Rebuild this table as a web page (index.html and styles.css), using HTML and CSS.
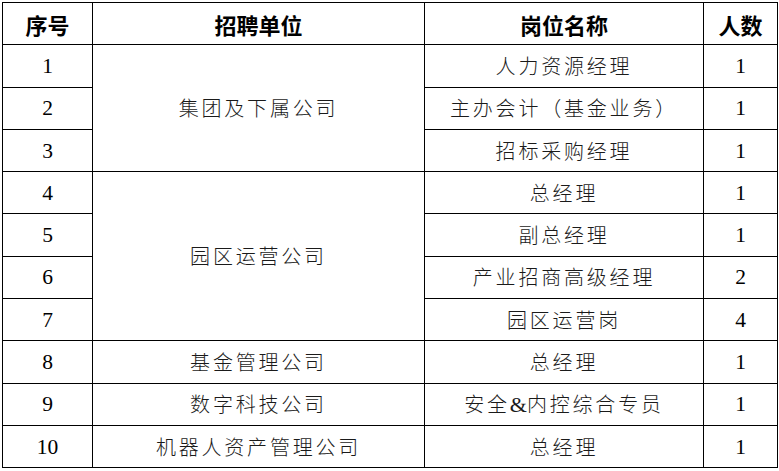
FILE: index.html
```html
<!DOCTYPE html>
<html lang="zh-CN">
<head>
<meta charset="utf-8">
<title>招聘岗位</title>
<link rel="stylesheet" href="styles.css">
</head>
<body>
<table class="jobs">
  <colgroup>
    <col class="c-no">
    <col class="c-unit">
    <col class="c-post">
    <col class="c-num">
  </colgroup>
  <thead>
    <tr>
      <th>序号</th>
      <th>招聘单位</th>
      <th>岗位名称</th>
      <th>人数</th>
    </tr>
  </thead>
  <tbody>
    <tr><td class="num">1</td><td class="cn" rowspan="3">集团及下属公司</td><td class="cn">人力资源经理</td><td class="num">1</td></tr>
    <tr><td class="num">2</td><td class="cn">主办会计（基金业务）</td><td class="num">1</td></tr>
    <tr><td class="num">3</td><td class="cn">招标采购经理</td><td class="num">1</td></tr>
    <tr><td class="num">4</td><td class="cn" rowspan="4">园区运营公司</td><td class="cn">总经理</td><td class="num">1</td></tr>
    <tr><td class="num">5</td><td class="cn">副总经理</td><td class="num">1</td></tr>
    <tr><td class="num">6</td><td class="cn">产业招商高级经理</td><td class="num">2</td></tr>
    <tr><td class="num">7</td><td class="cn">园区运营岗</td><td class="num">4</td></tr>
    <tr><td class="num">8</td><td class="cn">基金管理公司</td><td class="cn">总经理</td><td class="num">1</td></tr>
    <tr><td class="num">9</td><td class="cn">数字科技公司</td><td class="cn">安全<span class="amp">&amp;</span>内控综合专员</td><td class="num">1</td></tr>
    <tr><td class="num">10</td><td class="cn">机器人资产管理公司</td><td class="cn">总经理</td><td class="num">1</td></tr>
  </tbody>
</table>
</body>
</html>
```
FILE: styles.css
```css
html, body {
  margin: 0;
  padding: 0;
  background: #fff;
}
body {
  padding: 2px 0 0 2px;
}
.jobs {
  border-collapse: collapse;
  table-layout: fixed;
  width: 775px;
  color: #000;
}
.c-no { width: 90px; }
.c-unit { width: 332px; }
.c-post { width: 279px; }
.c-num { width: 74px; }

.jobs th,
.jobs td {
  border: 1.5px solid #000;
  padding: 0;
  text-align: center;
  vertical-align: middle;
  height: 42.3px;
  box-sizing: border-box;
}
.jobs th {
  font-family: "Noto Sans CJK SC", sans-serif;
  font-weight: 700;
  font-size: 22px;
  line-height: 24px;
}
.jobs td.num {
  font-family: "Liberation Serif", serif;
  font-size: 21.5px;
  line-height: 24px;
}
.jobs td.cn {
  font-family: "Noto Sans CJK SC", sans-serif;
  font-weight: 300;
  font-size: 20px;
  letter-spacing: 2.8px;
  line-height: 24px;
  color: #1a1a1a;
}
.amp {
  font-family: "Liberation Serif", serif;
  font-weight: 400;
  font-size: 22px;
  letter-spacing: 0;
}
```
